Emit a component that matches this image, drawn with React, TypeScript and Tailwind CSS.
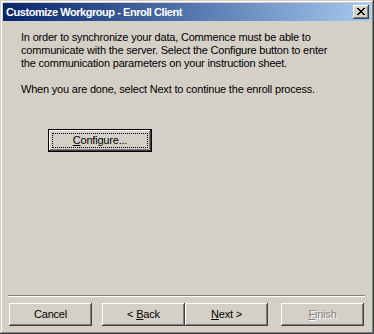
const bevel =
  "shadow-[inset_-1px_-1px_#404040,inset_1px_1px_#ffffff,inset_-2px_-2px_#808080,inset_2px_2px_#d4d0c8]"

const closeGlyph = [
  "XX....XX",
  ".XX..XX.",
  "..XXXX..",
  "...XX...",
  "..XXXX..",
  ".XX..XX.",
  "XX....XX",
]

const CloseButton = () => (
  <div className={`w-[16px] h-[14px] bg-[#d4d0c8] ${bevel} flex items-center justify-center`}>
    <svg width="8" height="7" viewBox="0 0 8 7" shapeRendering="crispEdges" className="-mt-[1px]">
      {closeGlyph.map((row, y) =>
        row.split("").map((c, x) =>
          c === "X" ? <rect key={`${x}-${y}`} x={x} y={y} width="1" height="1" fill="#000" /> : null
        )
      )}
    </svg>
  </div>
)

const WizButton = ({ children, disabled }: { children: React.ReactNode; disabled?: boolean }) => (
  <div
    className={`w-[83px] h-[23px] bg-[#d4d0c8] ${bevel} flex items-center justify-center whitespace-pre ${
      disabled ? "text-[#808080] [text-shadow:1px_1px_0_#ffffff]" : "text-black"
    }`}
  >
    {children}
  </div>
)

export default function App() {
  return (
    <div
      className="w-[374px] h-[334px] bg-[#d4d0c8] p-[3px] flex flex-col text-[11px] leading-[13px] tracking-[-0.2px] text-black shadow-[inset_-1px_-1px_#404040,inset_1px_1px_#d4d0c8,inset_-2px_-2px_#808080,inset_2px_2px_#ffffff]"
      style={{ fontFamily: '"Liberation Sans", Arial, sans-serif' }}
    >
      {/* title bar */}
      <div className="h-[18px] flex items-center justify-between pl-[3px] pr-[2px] bg-gradient-to-r from-[#0a246a] to-[#a6caf0]">
        <span className="text-white font-bold tracking-[-0.45px]">Customize Workgroup - Enroll Client</span>
        <CloseButton />
      </div>

      <div className="flex-1 flex flex-col">
        <div className="pl-[18px] pt-[10px]">
          <p>In order to synchronize your data, Commence must be able to</p>
          <p>communicate with the server. Select the Configure button to enter</p>
          <p>the communication parameters on your instruction sheet.</p>
          <p className="mt-[13px]">When you are done, select Next to continue the enroll process.</p>
        </div>

        <div className="ml-[45px] mt-[33px] w-[104px] h-[23px] border border-black">
          <div className={`w-full h-full bg-[#d4d0c8] ${bevel} p-[3px]`}>
            <div className="w-full h-full border border-dotted border-black flex items-center justify-center">
              <span><u>C</u>onfigure...</span>
            </div>
          </div>
        </div>

        <div className="flex-1" />

        <div className="ml-[5px] mr-[6px] border-t border-t-[#808080] border-b border-b-white" />

        <div className="flex mt-[6px] mb-[5px] ml-[6px]">
          <WizButton>Cancel</WizButton>
          <div className="ml-[10px] flex">
            <WizButton>{"< "}<u>B</u>ack</WizButton>
            <WizButton><u>N</u>{"ext >"}</WizButton>
          </div>
          <div className="ml-[13px]">
            <WizButton disabled>
              <span><u>F</u>inish</span>
            </WizButton>
          </div>
        </div>
      </div>
    </div>
  )
}
